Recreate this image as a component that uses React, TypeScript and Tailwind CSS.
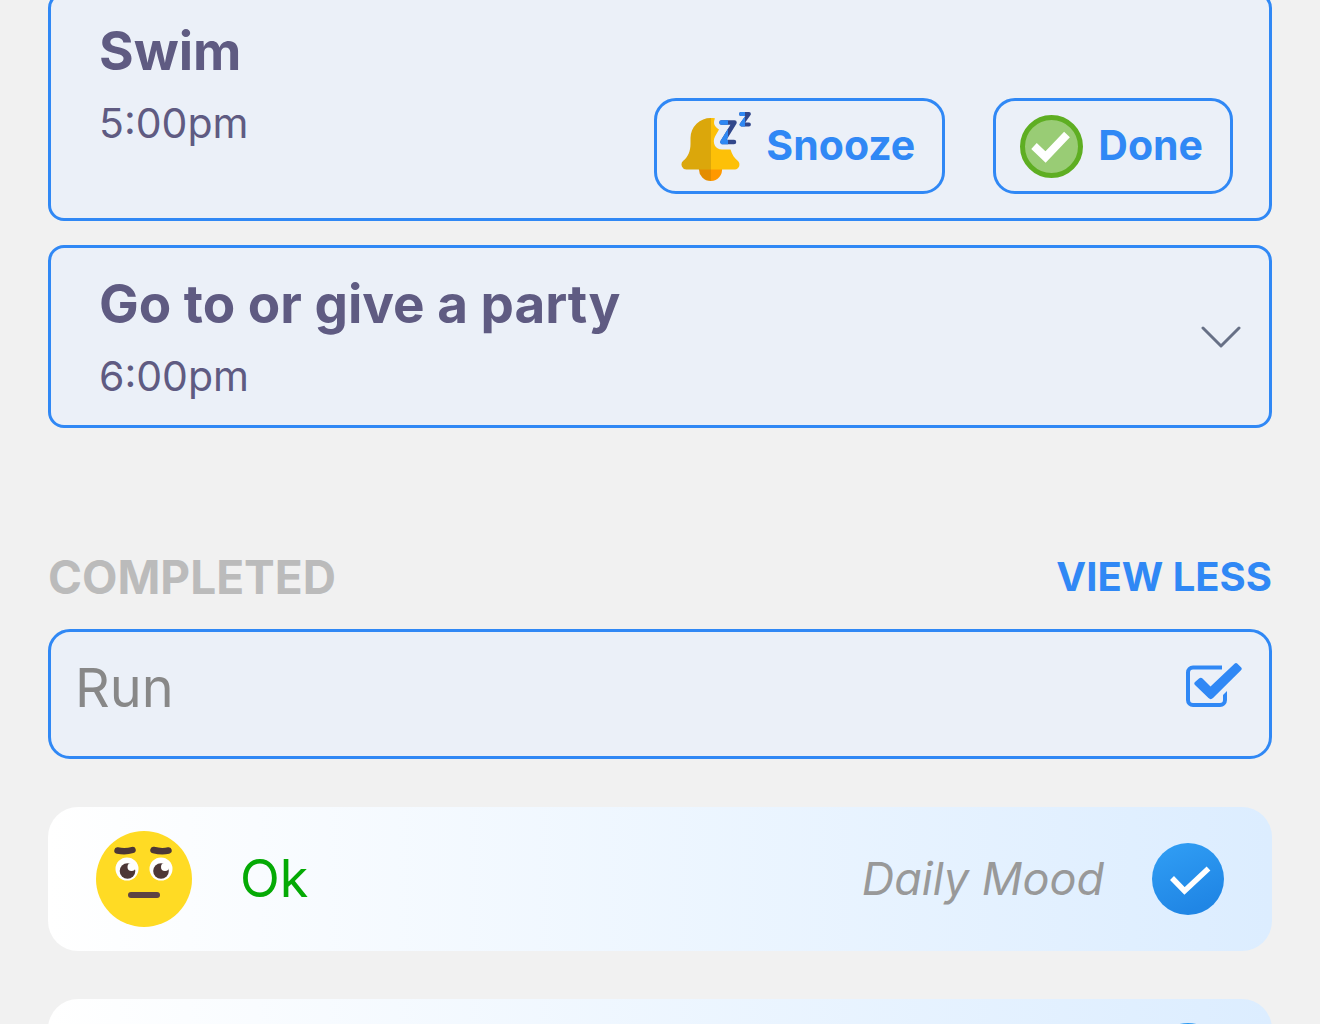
import React from "react";

const BellSnooze = () => (
  <svg viewBox="0 0 70 70" className="h-[70px] w-[70px] shrink-0" aria-hidden="true">
    <defs>
      <clipPath id="left-half">
        <path d="M0 0h47v70H0z" />
      </clipPath>
      <clipPath id="left-small">
        <path d="M0 0h64v20H0z" />
      </clipPath>
    </defs>
    <path d="M18 57h12v13a12 12 0 0 1-12-13z" fill="#e48d00" />
    <path d="M30 57h11a11.500 11.500 0 0 1-11 13z" fill="#ff9800" />
    <path
      d="M30 7v51.500H6a5 5 0 0 1-4-8.500c5-4 7.500-10 7.500-17v-6A20 20 0 0 1 30 7z"
      fill="#dba70b"
    />
    <path
      d="M30 7c2 0 3 0 4 .3-2 5-1 8 4 11.200l-4 7c-3 6 0 13 7 13h8.500c1.500 5 4 9 7.500 11.500 3 3 1 8.500-3 8.500H30z"
      fill="#fdc008"
    />
    <g fill="none" strokeWidth="4.500" strokeLinecap="round" strokeLinejoin="round">
      <path d="M40.500 11.500H53.500L41.500 31H53" stroke="#31478b" />
      <path d="M40.500 11.500H53.500L41.500 31H53" stroke="#2f88f3" clipPath="url(#left-half)" />
    </g>
    <g fill="none" strokeWidth="3.800" strokeLinecap="round" strokeLinejoin="round">
      <path d="M60 3H68L60.500 13.500H68" stroke="#31478b" />
      <path d="M60 3H68L60.500 13.500H68" stroke="#2f88f3" clipPath="url(#left-small)" />
    </g>
  </svg>
);

const DoneIcon = () => (
  <svg viewBox="0 0 63 63" className="h-[63px] w-[63px] shrink-0" aria-hidden="true">
    <circle cx="31.500" cy="31.500" r="29" fill="#99cc75" stroke="#5eae22" strokeWidth="5" />
    <path d="M14 31l11.500 11L47 19.500" fill="none" stroke="#fff" strokeWidth="8" />
  </svg>
);

const CheckSquare = () => (
  <svg viewBox="0 0 56 46" className="h-[46px] w-[56px] shrink-0" aria-hidden="true">
    <path
      d="M36 4.500H7a5 5 0 0 0-5 5V37a5 5 0 0 0 5 5h27a5 5 0 0 0 5-5v-5"
      fill="none"
      stroke="#3088f5"
      strokeWidth="4"
    />
    <path d="M37 32v1h4v-5z" fill="#3088f5" />
    <path
      d="M9 19l4-3.500c1-1 2.500-1 3.500 0l8 8L48.500.8c1-1 2-1 3 0l3.500 3.500c1 1 1 2 0 3L27 35c-1.500 1.500-3 1.500-4.500 0L9 22c-1-1-1-2 0-3z"
      fill="#3088f5"
    />
  </svg>
);

const ConfusedFace = () => (
  <svg viewBox="0 0 96 96" className="h-24 w-24 shrink-0" role="img" aria-label="Neutral face">
    <circle cx="48" cy="48" r="48" fill="#ffdb24" />
    <path d="M21.500 19.500q8 1.500 15-.5M57.500 19q8 2 15 .5" fill="none" stroke="#4d3736" strokeWidth="6.500" strokeLinecap="round" />
    <circle cx="31" cy="38" r="11.500" fill="#fff" />
    <circle cx="65" cy="38" r="11.500" fill="#fff" />
    <circle cx="31.500" cy="40" r="7.800" fill="#4d3736" />
    <circle cx="65" cy="40" r="7.800" fill="#4d3736" />
    <circle cx="35.500" cy="36" r="4" fill="#fff" />
    <circle cx="69" cy="36" r="4" fill="#fff" />
    <path d="M35 64h26" stroke="#5d4343" strokeWidth="6" strokeLinecap="round" />
  </svg>
);

const CheckCircle = () => (
  <svg viewBox="0 0 72 72" className="h-18 w-18 shrink-0" role="img" aria-label="Logged">
    <defs>
      <linearGradient id="check" x1="0" y1="0" x2="0.400" y2="1">
        <stop offset="0" stopColor="#319ff5" />
        <stop offset="1" stopColor="#2086e5" />
      </linearGradient>
    </defs>
    <circle cx="36" cy="36" r="36" fill="url(#check)" />
    <path d="M20 35l12.500 13L56.500 25.500" fill="none" stroke="#fff" strokeWidth="5.500" />
  </svg>
);

type TaskProps = {
  title: string;
  time: string;
};

const TaskText = ({ title, time }: TaskProps) => (
  <div className="flex flex-col gap-4 self-start text-[#5f5b82]">
    <h2 className="text-[53px] leading-[64px] font-bold">{title}</h2>
    <p className="text-[41px] leading-[48px]">{time}</p>
  </div>
);

const ActionButton = ({ children }: { children: React.ReactNode }) => (
  <button
    type="button"
    className="flex h-24 items-center gap-[15px] rounded-[22px] border-3 border-[#3088f5] pr-[27px] pl-6 text-[41px] font-bold text-[#3088f5]"
  >
    {children}
  </button>
);

const App = () => {
  return (
    <main className="h-screen overflow-hidden bg-[#f1f1f1] px-12 font-['Inter',sans-serif]">
      <section className="-mt-2 flex flex-col gap-6">
        <article className="flex min-h-[229px] items-end justify-between rounded-2xl border-3 border-[#3088f5] bg-[#ebf0f8] py-6 pr-9 pl-12">
          <TaskText title="Swim" time="5:00pm" />
          <div className="flex gap-12">
            <ActionButton>
              <BellSnooze />
              Snooze
            </ActionButton>
            <ActionButton>
              <DoneIcon />
              Done
            </ActionButton>
          </div>
        </article>
        <article className="flex min-h-[183px] items-center justify-between rounded-2xl border-3 border-[#3088f5] bg-[#ebf0f8] py-6 pr-7 pl-12">
          <TaskText title="Go to or give a party" time="6:00pm" />
          <button type="button" aria-label="Expand">
            <svg viewBox="0 0 40 22" className="h-[22px] w-10" aria-hidden="true">
              <path
                d="M2 2l18 18L38 2"
                fill="none"
                stroke="#677086"
                strokeWidth="3"
                strokeLinecap="round"
                strokeLinejoin="round"
              />
            </svg>
          </button>
        </article>
      </section>

      <section className="mt-[117px]">
        <div className="flex items-center justify-between leading-[64px]">
          <h3 className="text-[46px] font-bold text-[#bbbbbb]">COMPLETED</h3>
          <button type="button" className="text-[40px] font-bold text-[#3088f5]">
            VIEW LESS
          </button>
        </div>
        <article className="mt-5 flex min-h-[130px] items-start justify-between rounded-[22px] border-3 border-[#3088f5] bg-[#ebf0f8] py-6 pr-[27px] pl-6">
          <p className="text-[54px] leading-[64px] text-[#888888]">Run</p>
          <div className="pt-[7px]">
            <CheckSquare />
          </div>
        </article>
      </section>

      <section className="mt-12 flex flex-col gap-12">
        <article className="flex h-36 items-center justify-between rounded-[30px] bg-linear-to-r from-white to-[#dcedff] px-12">
          <div className="flex items-center gap-12">
            <ConfusedFace />
            <p className="text-[52px] text-[#05aa05]">Ok</p>
          </div>
          <div className="flex items-center gap-12">
            <p className="text-[45px] text-[#999999] italic">Daily Mood</p>
            <CheckCircle />
          </div>
        </article>
        <article className="flex h-36 items-start justify-end rounded-[30px] bg-linear-to-r from-white to-[#dcedff] px-12 pt-6">
          <CheckCircle />
        </article>
      </section>
    </main>
  );
};

export default App;
